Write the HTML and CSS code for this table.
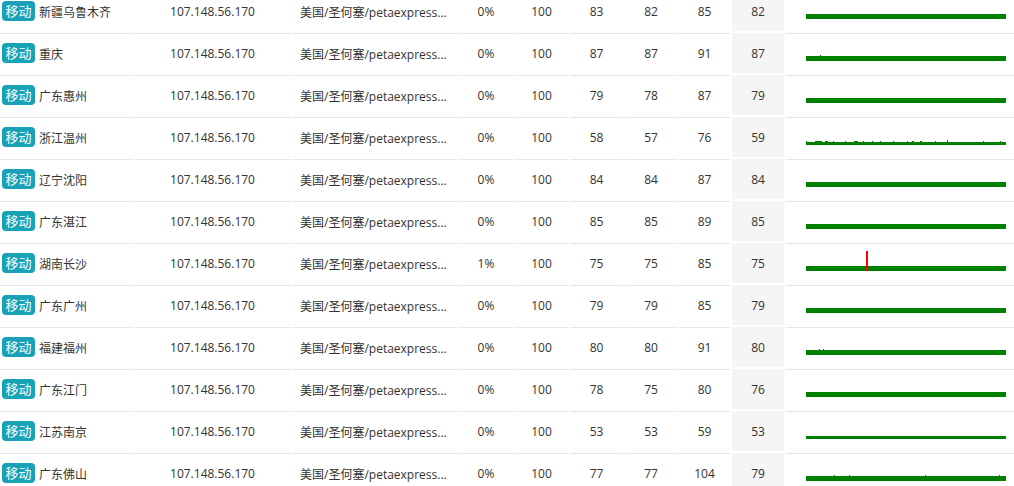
FILE: index.html
```html
<!DOCTYPE html>
<html lang="zh">
<head>
<meta charset="utf-8">
<title>Ping</title>
<link rel="stylesheet" href="styles.css">
</head>
<body>
<table class="ping">
<colgroup>
<col class="w-node"><col class="w-ip"><col class="w-loc"><col class="w-n1"><col class="w-n2"><col class="w-n2"><col class="w-n3"><col class="w-n4"><col class="w-n3"><col class="w-chart">
</colgroup>
<tbody>
<tr><td><div class="node"><span class="badge">移动</span>新疆乌鲁木齐</div></td><td>107.148.56.170</td><td class="loc">美国/圣何塞/petaexpress...</td><td>0%</td><td>100</td><td>83</td><td>82</td><td>85</td><td class="hl">82</td>
<td class="chart"><svg width="200" height="20" viewBox="0 0 200 20"><rect x="0" y="15" width="200" height="5" fill="#008000"/></svg></td></tr>

<tr><td><div class="node"><span class="badge">移动</span>重庆</div></td><td>107.148.56.170</td><td class="loc">美国/圣何塞/petaexpress...</td><td>0%</td><td>100</td><td>87</td><td>87</td><td>91</td><td class="hl">87</td>
<td class="chart"><svg width="200" height="20" viewBox="0 0 200 20"><rect x="0" y="15" width="200" height="5" fill="#008000"/><rect x="14" y="14" width="1" height="1" fill="#008000"/></svg></td></tr>

<tr><td><div class="node"><span class="badge">移动</span>广东惠州</div></td><td>107.148.56.170</td><td class="loc">美国/圣何塞/petaexpress...</td><td>0%</td><td>100</td><td>79</td><td>78</td><td>87</td><td class="hl">79</td>
<td class="chart"><svg width="200" height="20" viewBox="0 0 200 20"><rect x="0" y="15" width="200" height="5" fill="#008000"/></svg></td></tr>

<tr><td><div class="node"><span class="badge">移动</span>浙江温州</div></td><td>107.148.56.170</td><td class="loc">美国/圣何塞/petaexpress...</td><td>0%</td><td>100</td><td>58</td><td>57</td><td>76</td><td class="hl">59</td>
<td class="chart"><svg width="200" height="20" viewBox="0 0 200 20"><rect x="0" y="17" width="200" height="3" fill="#008000"/><g fill="#008000"><rect x="0" y="16" width="1" height="1"/><rect x="9" y="16" width="7" height="1"/><rect x="19" y="16" width="3" height="1"/><rect x="27" y="16" width="1" height="1"/><rect x="39" y="16" width="1" height="1"/><rect x="48" y="16" width="4" height="1"/><rect x="57" y="16" width="1" height="1"/><rect x="66" y="16" width="1" height="1"/><rect x="74" y="16" width="1" height="1"/><rect x="87" y="16" width="1" height="1"/><rect x="101" y="16" width="1" height="1"/><rect x="106" y="16" width="2" height="1"/><rect x="114" y="16" width="2" height="1"/><rect x="129" y="16" width="1" height="1"/><rect x="141" y="15" width="1" height="2"/><rect x="177" y="16" width="1" height="1"/><rect x="194" y="16" width="1" height="1"/></g></svg></td></tr>

<tr><td><div class="node"><span class="badge">移动</span>辽宁沈阳</div></td><td>107.148.56.170</td><td class="loc">美国/圣何塞/petaexpress...</td><td>0%</td><td>100</td><td>84</td><td>84</td><td>87</td><td class="hl">84</td>
<td class="chart"><svg width="200" height="20" viewBox="0 0 200 20"><rect x="0" y="15" width="200" height="5" fill="#008000"/></svg></td></tr>

<tr><td><div class="node"><span class="badge">移动</span>广东湛江</div></td><td>107.148.56.170</td><td class="loc">美国/圣何塞/petaexpress...</td><td>0%</td><td>100</td><td>85</td><td>85</td><td>89</td><td class="hl">85</td>
<td class="chart"><svg width="200" height="20" viewBox="0 0 200 20"><rect x="0" y="15" width="200" height="5" fill="#008000"/></svg></td></tr>

<tr><td><div class="node"><span class="badge">移动</span>湖南长沙</div></td><td>107.148.56.170</td><td class="loc">美国/圣何塞/petaexpress...</td><td>1%</td><td>100</td><td>75</td><td>75</td><td>85</td><td class="hl">75</td>
<td class="chart"><svg width="200" height="20" viewBox="0 0 200 20"><rect x="0" y="15" width="200" height="5" fill="#008000"/><rect x="60" y="0" width="2" height="20" fill="#ff0000"/></svg></td></tr>

<tr><td><div class="node"><span class="badge">移动</span>广东广州</div></td><td>107.148.56.170</td><td class="loc">美国/圣何塞/petaexpress...</td><td>0%</td><td>100</td><td>79</td><td>79</td><td>85</td><td class="hl">79</td>
<td class="chart"><svg width="200" height="20" viewBox="0 0 200 20"><rect x="0" y="15" width="200" height="5" fill="#008000"/></svg></td></tr>

<tr><td><div class="node"><span class="badge">移动</span>福建福州</div></td><td>107.148.56.170</td><td class="loc">美国/圣何塞/petaexpress...</td><td>0%</td><td>100</td><td>80</td><td>80</td><td>91</td><td class="hl">80</td>
<td class="chart"><svg width="200" height="20" viewBox="0 0 200 20"><rect x="0" y="15" width="200" height="5" fill="#008000"/><rect x="13" y="14" width="1" height="1" fill="#008000"/><rect x="17" y="14" width="1" height="1" fill="#008000"/></svg></td></tr>

<tr><td><div class="node"><span class="badge">移动</span>广东江门</div></td><td>107.148.56.170</td><td class="loc">美国/圣何塞/petaexpress...</td><td>0%</td><td>100</td><td>78</td><td>75</td><td>80</td><td class="hl">76</td>
<td class="chart"><svg width="200" height="20" viewBox="0 0 200 20"><rect x="0" y="15" width="200" height="5" fill="#008000"/></svg></td></tr>

<tr><td><div class="node"><span class="badge">移动</span>江苏南京</div></td><td>107.148.56.170</td><td class="loc">美国/圣何塞/petaexpress...</td><td>0%</td><td>100</td><td>53</td><td>53</td><td>59</td><td class="hl">53</td>
<td class="chart"><svg width="200" height="20" viewBox="0 0 200 20"><rect x="0" y="17" width="200" height="3" fill="#008000"/></svg></td></tr>

<tr><td><div class="node"><span class="badge">移动</span>广东佛山</div></td><td>107.148.56.170</td><td class="loc">美国/圣何塞/petaexpress...</td><td>0%</td><td>100</td><td>77</td><td>77</td><td>104</td><td class="hl">79</td>
<td class="chart"><svg width="200" height="20" viewBox="0 0 200 20"><rect x="0" y="15" width="200" height="5" fill="#008000"/><g fill="#008000"><rect x="28" y="14" width="1" height="1"/><rect x="43" y="14" width="1" height="1"/><rect x="119" y="14" width="1" height="1"/><rect x="193" y="14" width="1" height="1"/></g></svg></td></tr>
</tbody>
</table>
</body>
</html>
```

FILE: styles.css
```css
html, body {
  margin: 0;
  padding: 0;
  overflow: hidden;
  background: #fff;
}

body {
  font-family: "Open Sans", "Noto Sans CJK SC", sans-serif;
  font-size: 12px;
  color: #333;
}

.ping {
  table-layout: fixed;
  border-collapse: separate;
  border-spacing: 2px;
  margin: -11px 0 0 -2px;
  width: 1020px;
}

.w-node { width: 133px; }
.w-ip { width: 155px; }
.w-loc { width: 165px; }
.w-n1 { width: 54px; }
.w-n2 { width: 53px; }
.w-n3 { width: 52px; }
.w-n4 { width: 51px; }
.w-chart { width: 230px; }

.ping td {
  padding: 0;
  border-top: 1px solid #e6e6e6;
  text-align: center;
  vertical-align: middle;
  white-space: nowrap;
  overflow: hidden;
}

.ping td.loc {
  text-align: left;
  padding-left: 8px;
}

.ping td.hl {
  background: #f5f5f5;
  border-top-color: #f5f5f5;
}

.ping td.chart {
  vertical-align: top;
  text-align: left;
  padding: 7px 0 12px 20px;
}

.chart svg {
  display: block;
}

.node {
  display: flex;
  align-items: center;
  padding-left: 2px;
}

.badge {
  display: inline-block;
  width: 33px;
  height: 20px;
  line-height: 20px;
  margin: 0 4px 2px 0;
  border-radius: 4px;
  background: #17a2b8;
  color: #fff;
  font-size: 13px;
  text-align: center;
}
```
